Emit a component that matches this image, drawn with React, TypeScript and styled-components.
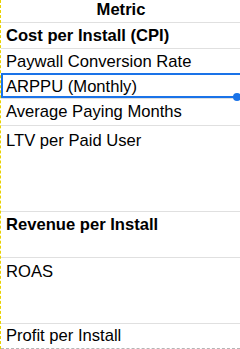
import React from "react";
import styled, { createGlobalStyle } from "styled-components";

const Global = createGlobalStyle`
  html, body { margin: 0; padding: 0; background: #ffffff; overflow: hidden; }
  body { font-family: "Liberation Sans", Arial, sans-serif; }
`;

const Sheet = styled.div`
  width: 240px;
  box-sizing: border-box;
  border-left: 1px dashed #e8d200;
  display: flex;
  flex-direction: column;
  color: #000;
  font-size: 16.6px;
  line-height: 19px;
  overflow: hidden;
`;

const Cell = styled.div<{ $h: number; $bold?: boolean; $center?: boolean; $last?: boolean; $pt?: number }>`
  position: relative;
  box-sizing: border-box;
  height: ${(p) => p.$h}px;
  padding: ${(p) => p.$pt ?? 3}px 4px 0 5px;
  font-weight: ${(p) => (p.$bold ? 700 : 400)};
  text-align: ${(p) => (p.$center ? "center" : "left")};
  border-bottom: 1px ${(p) => (p.$last ? "dashed #b5b5b5" : "solid #e0e0e0")};
  white-space: nowrap;
`;

const Selection = styled.div`
  position: absolute;
  left: 0;
  right: -4px;
  top: -2px;
  bottom: 0;
  border: 2px solid #1a73e8;
  pointer-events: none;
`;

const Handle = styled.div`
  position: absolute;
  right: 1px;
  bottom: -5px;
  width: 8px;
  height: 8px;
  border-radius: 50%;
  background: #1a73e8;
`;

const rows = [
  { t: "Metric", h: 23, bold: true, center: true, pt: 0 },
  { t: "Cost per Install (CPI)", h: 26, bold: true },
  { t: "Paywall Conversion Rate", h: 26 },
  { t: "ARPPU (Monthly)", h: 24, sel: true, pt: 2 },
  { t: "Average Paying Months", h: 27 },
  { t: "LTV per Paid User", h: 86, pt: 5 },
  { t: "Revenue per Install", h: 46, bold: true },
  { t: "ROAS", h: 66, pt: 4 },
  { t: "Profit per Install", h: 25, last: true, pt: 2 },
];

export default function App() {
  return (
    <>
      <Global />
      <Sheet>
        {rows.map((r) => (
          <Cell key={r.t} $h={r.h} $bold={r.bold} $center={r.center} $last={r.last} $pt={r.pt}>
            {r.t}
            {r.sel && (
              <Selection>
                <Handle />
              </Selection>
            )}
          </Cell>
        ))}
      </Sheet>
    </>
  );
}
